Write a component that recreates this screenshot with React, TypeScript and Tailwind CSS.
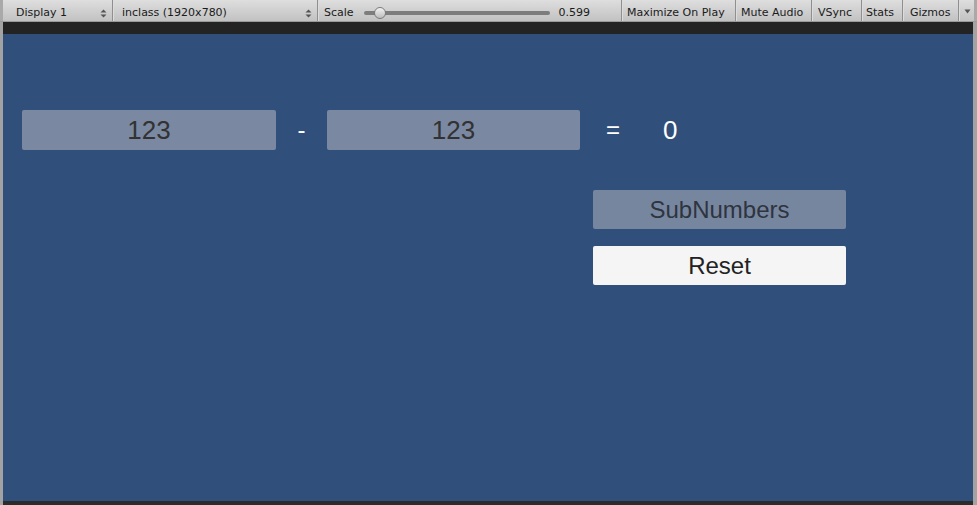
import React from 'react';

const Divider = () => (
  <div className="flex h-full">
    <div className="w-px bg-[#8f8f8f]" />
    <div className="w-px bg-[#dcdcdc]" />
  </div>
);

const UpDown = () => (
  <svg width="7" height="9" viewBox="0 0 7 9" className="text-[#555]">
    <path d="M3.5 0.5 L6.5 3.5 L0.5 3.5 Z" fill="currentColor" />
    <path d="M3.5 8.5 L6.5 5.5 L0.5 5.5 Z" fill="currentColor" />
  </svg>
);

const Toolbar = () => (
  <div className="flex h-[22px] bg-gradient-to-b from-[#dedede] to-[#c2c2c2] text-[11px] text-[#1a1a1a] font-['DejaVu_Sans',sans-serif] border-b border-[#9a9a9a]">
    <div className="w-[3px] h-full bg-[#a9a9a9]" />
    <div className="flex items-center w-[109px] h-full pt-[5px] pl-[13px] pr-[5px] justify-between">
      <span>Display 1</span>
      <UpDown />
    </div>
    <Divider />
    <div className="flex items-center w-[203px] h-full pt-[5px] pl-[8px] pr-[5px] justify-between">
      <span>inclass (1920x780)</span>
      <UpDown />
    </div>
    <Divider />
    <div className="flex items-center w-[302px] h-full pt-[5px] pl-[5px]">
      <span>Scale</span>
      <div className="relative ml-[10px] w-[186px] h-[4px] rounded-full bg-[#7d7d7d]">
        <div className="absolute left-[10px] top-[-4px] w-[12px] h-[12px] rounded-full bg-gradient-to-b from-[#f2f2f2] to-[#bdbdbd] border border-[#7a7a7a]" />
      </div>
      <span className="ml-[9px]">0.599</span>
    </div>
    <Divider />
    <div className="flex items-center pt-[5px] px-[4px] w-[112px]">Maximize On Play</div>
    <Divider />
    <div className="flex items-center pt-[5px] px-[4px] w-[74px]">Mute Audio</div>
    <Divider />
    <div className="flex items-center pt-[5px] px-[5px] w-[48px]">VSync</div>
    <Divider />
    <div className="flex items-center pt-[5px] px-[3px] w-[39px]">Stats</div>
    <Divider />
    <div className="flex items-center pt-[5px] px-[6px] w-[54px]">Gizmos</div>
    <Divider />
    <div className="flex items-center justify-center w-[14px] pt-[2px]">
      <svg width="7" height="5" viewBox="0 0 7 5">
        <path d="M0.5 0.5 L6.5 0.5 L3.5 4.5 Z" fill="#555" />
      </svg>
    </div>
    <div className="flex-1 h-full bg-[#a9a9a9]" />
  </div>
);

export default function App() {
  return (
    <div className="w-[977px] h-[505px] flex flex-col bg-[#a3a3a3] overflow-hidden font-['Liberation_Sans',Arial,sans-serif]">
      <Toolbar />
      <div className="flex-1 flex flex-col mx-[3px] mr-[4px]">
        <div className="h-[12px] bg-[#232323]" />
        <div className="flex-1 bg-[#314f7b] pt-[76px] pl-[19px]">
          <div className="flex items-center h-[40px]">
            <div className="w-[254px] h-[40px] rounded-[2px] bg-[#7a89a1] flex items-center justify-center text-[26px] text-[#323232]">
              123
            </div>
            <div className="w-[51px] text-center text-[24px] text-white">-</div>
            <div className="w-[253px] h-[40px] rounded-[2px] bg-[#7a89a1] flex items-center justify-center text-[26px] text-[#323232]">
              123
            </div>
            <div className="w-[66px] text-center text-[24px] text-white">=</div>
            <div className="ml-[17px] text-[26px] text-white">0</div>
          </div>
          <div className="ml-[571px] mt-[40px] flex flex-col gap-[17px] w-[253px]">
            <div className="h-[39px] rounded-[2px] bg-[#77869f] flex items-center justify-center text-[24px] text-[#2e3440]">
              SubNumbers
            </div>
            <div className="h-[39px] rounded-[2px] bg-[#f5f5f5] flex items-center justify-center text-[24px] text-[#222]">
              Reset
            </div>
          </div>
        </div>
        <div className="h-[4px] bg-[#2a2d2a]" />
      </div>
    </div>
  );
}
